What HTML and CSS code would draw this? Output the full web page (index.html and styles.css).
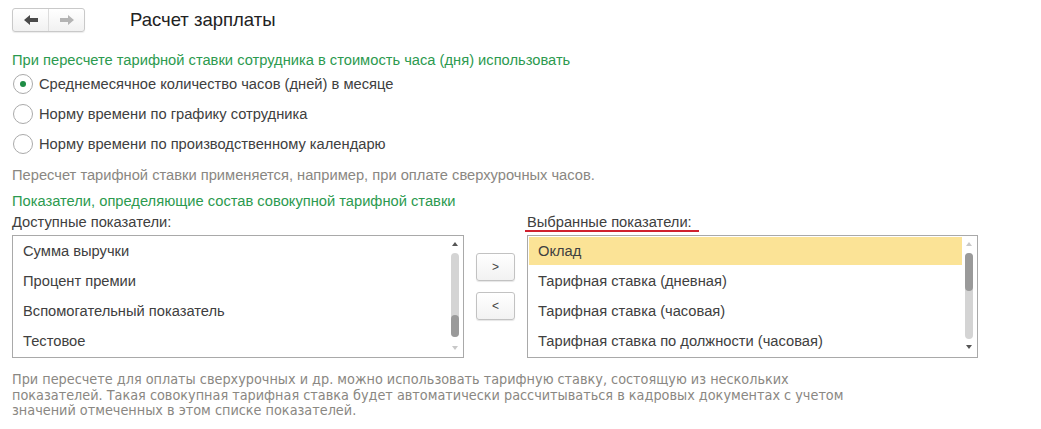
FILE: index.html
```html
<!DOCTYPE html>
<html lang="ru">

<head>
    <meta charset="UTF-8">
    <title>Расчет зарплаты</title>
    <link rel="stylesheet" href="styles.css">
</head>

<body>
    <div class="header">
        <div class="nav">
            <button class="nav-btn">
                <svg width="14" height="10" viewBox="0 0 14 10"><path d="M0 5 L6 0 L6 3 L14 3 L14 7 L6 7 L6 10 Z" fill="#4a4a4a"/></svg>
            </button>
            <button class="nav-btn">
                <svg width="14" height="10" viewBox="0 0 14 10"><path d="M14 5 L8 0 L8 3 L0 3 L0 7 L8 7 L8 10 Z" fill="#b4b4b4"/></svg>
            </button>
        </div>
        <div class="title">Расчет зарплаты</div>
    </div>

    <div class="content">
        <div class="group-title">При пересчете тарифной ставки сотрудника в стоимость часа (дня) использовать</div>
        <label class="radio"><span class="circle checked"></span>Среднемесячное количество часов (дней) в месяце</label>
        <label class="radio"><span class="circle"></span>Норму времени по графику сотрудника</label>
        <label class="radio"><span class="circle"></span>Норму времени по производственному календарю</label>
        <div class="note">Пересчет тарифной ставки применяется, например, при оплате сверхурочных часов.</div>

        <div class="group-title second">Показатели, определяющие состав совокупной тарифной ставки</div>

        <div class="lists">
            <div class="list-col">
                <div class="list-label">Доступные показатели:</div>
                <div class="list-box">
                    <div class="items">
                        <div class="item">Сумма выручки</div>
                        <div class="item">Процент премии</div>
                        <div class="item">Вспомогательный показатель</div>
                        <div class="item">Тестовое</div>
                    </div>
                    <div class="scroll">
                        <span class="arrow up dark"></span>
                        <div class="track bottom"><div class="thumb"></div></div>
                        <span class="arrow down"></span>
                    </div>
                </div>
            </div>

            <div class="move-buttons">
                <button class="move">&gt;</button>
                <button class="move">&lt;</button>
            </div>

            <div class="list-col">
                <div class="list-label"><span class="underlined">Выбранные показатели:</span></div>
                <div class="list-box">
                    <div class="items">
                        <div class="item selected">Оклад</div>
                        <div class="item">Тарифная ставка (дневная)</div>
                        <div class="item">Тарифная ставка (часовая)</div>
                        <div class="item">Тарифная ставка по должности (часовая)</div>
                    </div>
                    <div class="scroll">
                        <span class="arrow up"></span>
                        <div class="track"><div class="thumb short"></div></div>
                        <span class="arrow down dark"></span>
                    </div>
                </div>
            </div>
        </div>

        <div class="footer-note">При пересчете для оплаты сверхурочных и др. можно использовать тарифную ставку, состоящую из нескольких<br>показателей. Такая совокупная тарифная ставка будет автоматически рассчитываться в кадровых документах с учетом<br>значений отмеченных в этом списке показателей.</div>
    </div>
</body>

</html>
```

FILE: styles.css
```css
body {
    margin: 0;
    padding: 0;
    background: #fff;
    font-family: "Liberation Sans", Arial, sans-serif;
    font-size: 14.7px;
    color: #404040;
}

.header {
    display: flex;
    align-items: center;
    height: 40px;
    padding-left: 12px;
}

.nav {
    display: flex;
    width: 73px;
    height: 24px;
    border: 1px solid #c9c9c9;
    border-radius: 3px;
    box-sizing: border-box;
    background: linear-gradient(#ffffff, #f1f1f1);
    box-shadow: 0 1px 1px rgba(0, 0, 0, 0.08);
}

.nav-btn {
    flex: 1;
    display: flex;
    align-items: center;
    justify-content: center;
    border: none;
    background: transparent;
    padding: 0;
}

.nav-btn + .nav-btn {
    border-left: 1px solid #dcdcdc;
}

.title {
    margin-left: 45px;
    font-size: 18.5px;
    color: #222;
    padding-bottom: 1px;
}

.content {
    padding-left: 12px;
}

.group-title {
    margin-top: 12px;
    height: 17px;
    line-height: 17px;
    color: #2c9a4f;
}

.group-title.second {
    margin-top: 8px;
    height: 18px;
    line-height: 18px;
}

.radio {
    display: flex;
    align-items: center;
    height: 30px;
    color: #404040;
}

.circle {
    width: 20px;
    height: 20px;
    margin-left: 1px;
    margin-right: 6px;
    border: 1px solid #aaa;
    border-radius: 50%;
    box-sizing: border-box;
    display: flex;
    align-items: center;
    justify-content: center;
    background: #fff;
}

.circle.checked::after {
    content: "";
    width: 6px;
    height: 6px;
    border-radius: 50%;
    background: #1e8c45;
}

.note {
    margin-top: 7px;
    height: 18px;
    line-height: 18px;
    color: #8a8782;
}

.lists {
    display: flex;
    margin-top: 3px;
}

.list-col {
    display: flex;
    flex-direction: column;
}

.list-label {
    height: 22px;
    line-height: 18px;
}

.underlined {
    display: inline-block;
    line-height: 15px;
    padding-right: 7px;
    border-bottom: 2px solid #d0202e;
    margin-left: -2px;
    padding-left: 2px;
}

.list-box {
    display: flex;
    width: 452px;
    height: 123px;
    border: 1px solid #a9a9a9;
    box-sizing: border-box;
}

.items {
    flex: 1;
    padding: 1px 0 0 1px;
}

.item {
    height: 30px;
    line-height: 28px;
    padding-left: 9px;
    color: #404040;
}

.item.selected {
    height: 28px;
    margin-bottom: 2px;
    background: #fbe396;
}

.scroll {
    width: 14px;
    margin-right: 1px;
    display: flex;
    flex-direction: column;
    align-items: center;
    padding-top: 6px;
}

.arrow {
    width: 0;
    height: 0;
    border-left: 3px solid transparent;
    border-right: 3px solid transparent;
}

.arrow.up {
    border-bottom: 4px solid #c8c8c8;
}

.arrow.down {
    border-top: 4px solid #c8c8c8;
}

.arrow.up.dark {
    border-bottom-color: #555;
}

.arrow.down.dark {
    border-top-color: #555;
}

.track {
    width: 8px;
    height: 86px;
    margin: 7px 0 6px;
    border-radius: 4px;
    background: #d4d4d4;
    display: flex;
    flex-direction: column;
}

.track.bottom {
    justify-content: flex-end;
    height: 84px;
    margin-bottom: 9px;
}

.thumb {
    height: 22px;
    border-radius: 4px;
    background: #9a9a9a;
}

.thumb.short {
    height: 38px;
}

.move-buttons {
    width: 63px;
    display: flex;
    flex-direction: column;
    align-items: flex-start;
    padding-top: 40px;
    padding-left: 12px;
    box-sizing: border-box;
}

.move {
    width: 39px;
    height: 28px;
    margin-bottom: 11px;
    border: 1px solid #c2c2c2;
    border-radius: 3px;
    background: linear-gradient(#ffffff, #f2f2f2);
    box-shadow: 0 1px 1px rgba(0, 0, 0, 0.1);
    font-family: "Liberation Sans", Arial, sans-serif;
    font-size: 12px;
    color: #444;
    padding: 0;
}

.lists .list-col:last-child .list-box {
    width: 451px;
}

.footer-note {
    margin-top: 14px;
    font-family: "DejaVu Sans Condensed", "Liberation Sans", sans-serif;
    font-size: 14.3px;
    line-height: 15.5px;
    color: #8a8782;
}
```
